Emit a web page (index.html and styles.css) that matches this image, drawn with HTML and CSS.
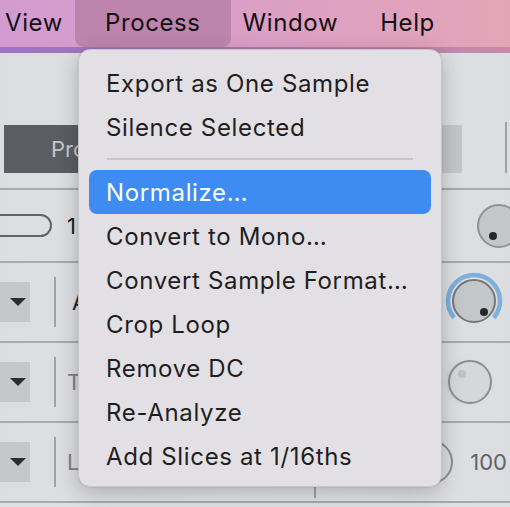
FILE: index.html
```html
<!DOCTYPE html>
<html lang="en">
<head>
<meta charset="utf-8">
<title>Process menu</title>
<link rel="stylesheet" href="styles.css">
</head>
<body>
<div class="screen">
  <header class="menubar">
    <span class="menu-title">View</span>
    <span class="menu-title active">Process</span>
    <span class="menu-title">Window</span>
    <span class="menu-title">Help</span>
  </header>
  <div class="menubar-edge"></div>

  <main class="window">
    <div class="row row-top">
      <div class="dark-btn">Process</div>
      <div class="light-btn"></div>
      <div class="vline tall"></div>
    </div>
    <div class="row row-2">
      <div class="pill"></div>
      <span class="value dark">1</span>
      <div class="knob knob-a"><span class="dot"></span></div>
    </div>
    <div class="row row-3">
      <div class="dropdown"><span class="tri"></span></div>
      <div class="vline"></div>
      <span class="label dark">A</span>
      <div class="knob-ring">
        <svg width="60" height="60" viewBox="0 0 60 60" class="ring">
          <path d="M 10.1 46.7 A 26 26 0 1 1 49.9 46.7" fill="none" stroke="#7db0dc" stroke-width="4.5"/>
        </svg>
        <div class="knob knob-b"><span class="dot"></span></div>
      </div>
    </div>
    <div class="row row-4">
      <div class="dropdown"><span class="tri"></span></div>
      <div class="vline"></div>
      <span class="label muted">T</span>
      <div class="knob knob-c"><span class="dot"></span></div>
    </div>
    <div class="row row-5">
      <div class="dropdown"><span class="tri"></span></div>
      <div class="vline"></div>
      <span class="label muted">L</span>
      <div class="vline low"></div>
      <div class="knob knob-d"></div>
      <span class="value muted">100</span>
    </div>
  </main>

  <nav class="dropdown-menu">
    <div class="item">Export as One Sample</div>
    <div class="item">Silence Selected</div>
    <div class="separator"></div>
    <div class="item selected">Normalize…</div>
    <div class="item">Convert to Mono…</div>
    <div class="item">Convert Sample Format…</div>
    <div class="item">Crop Loop</div>
    <div class="item">Remove DC</div>
    <div class="item">Re-Analyze</div>
    <div class="item">Add Slices at 1/16ths</div>
  </nav>
</div>
</body>
</html>
```

FILE: styles.css
```css
html, body {
  margin: 0;
  padding: 0;
}
body {
  width: 510px;
  height: 507px;
  overflow: hidden;
  font-family: "Inter", "Noto Sans", sans-serif;
  background: #dfe0e3;
}
.screen {
  position: relative;
  width: 510px;
  height: 507px;
  overflow: hidden;
}

/* menu bar */
.menubar {
  height: 47px;
  display: flex;
  align-items: stretch;
  gap: 42px;
  padding-left: 5px;
  background: linear-gradient(90deg, #d39bd0 0%, #dc9fc6 50%, #e3a5b6 100%);
  font-size: 24px;
  letter-spacing: 0.6px;
  color: #111;
}
.menu-title {
  display: flex;
  align-items: center;
  padding-bottom: 3px;
}
.menu-title.active {
  padding: 0 30px 3px;
  margin: 0 -30px;
  background: #bd85ae;
  border-radius: 0 0 9px 9px;
}
.menubar-edge {
  height: 6px;
  background: linear-gradient(90deg, #9c72c2 0%, #b47ab8 50%, #c98aa8 100%);
}

/* background window */
.window {
  display: flex;
  flex-direction: column;
  background: linear-gradient(90deg, #dcdde0, #e1e2e5 60%, #dcdde0);
}
.row {
  display: flex;
  align-items: center;
  border-bottom: 2px solid #a6aaae;
  font-size: 22px;
}
.row-top {
  height: 137px;
  align-items: flex-end;
  box-sizing: border-box;
  padding-bottom: 15px;
}
.dark-btn {
  margin-left: 4px;
  width: 200px;
  height: 48px;
  background: #5a5e62;
  color: #c4c7ca;
  box-sizing: border-box;
  padding-left: 47px;
  display: flex;
  align-items: center;
}
.light-btn {
  margin-left: auto;
  width: 80px;
  height: 48px;
  background: #c4c7ca;
}
.vline {
  width: 2px;
  height: 50px;
  background: #9ea2a6;
  flex: none;
}
.vline.tall {
  height: 51px;
  margin-left: 43px;
  margin-right: 3px;
}
.row-2 { height: 71px; }
.row-3 { height: 78px; }
.row-4 { height: 78px; }
.row-5 { height: 78px; }

.pill {
  width: 70px;
  height: 23px;
  margin-left: -18px;
  border: 2px solid #5f6468;
  border-radius: 13px;
  box-sizing: border-box;
  flex: none;
}
.value.dark {
  margin-left: 15px;
  color: #1c1c1e;
}
.dark { color: #222; }
.muted { color: #7c8085; }

.dropdown {
  width: 30px;
  height: 40px;
  background: #c5c8cb;
  flex: none;
  display: flex;
  align-items: center;
  padding-left: 10px;
  box-sizing: border-box;
}
.tri {
  width: 0;
  height: 0;
  border-left: 8px solid transparent;
  border-right: 8px solid transparent;
  border-top: 8px solid #2a2d30;
}
.row .dropdown + .vline {
  margin-left: 24px;
}
.label.dark { margin-left: 16px; }
.label.muted { margin-left: 11px; }

.knob {
  position: relative;
  width: 44px;
  height: 44px;
  border-radius: 50%;
  border: 2px solid #8e9296;
  background: #c4c7ca;
  box-sizing: border-box;
  flex: none;
}
.dot {
  position: absolute;
  width: 8px;
  height: 8px;
  border-radius: 50%;
  background: #25282b;
}
.knob-a {
  margin-left: auto;
  margin-right: -11px;
}
.knob-a .dot { left: 10px; top: 26px; }

.knob-ring {
  position: relative;
  margin-left: auto;
  margin-right: 6px;
  width: 60px;
  height: 60px;
  display: flex;
  align-items: center;
  justify-content: center;
  flex: none;
  margin-top: -3px;
}
.ring {
  position: absolute;
  left: 0;
  top: 0;
}
.knob-b {
  border-color: #72777b;
}
.knob-b .dot { left: 26px; top: 27px; }

.knob-c {
  margin-left: auto;
  margin-right: 18px;
  background: #d5d7da;
  border-color: #8b8f93;
  box-shadow: -3px 0 4px -2px rgba(120, 124, 128, 0.25);
}
.knob-c .dot { left: 8px; top: 8px; background: #bfc2c5; }

.vline.low {
  margin-left: 235px;
  height: 47px;
  margin-top: 24px;
}
.knob-d {
  margin-left: auto;
  background: transparent;
  border-color: #8b8f93;
}
.value.muted {
  margin-left: 17px;
  margin-right: 3px;
  color: #5f6367;
}

/* the open menu */
.dropdown-menu {
  position: absolute;
  left: 78px;
  top: 49px;
  width: 364px;
  height: 438px;
  box-sizing: border-box;
  padding: 11px 10px 10px;
  background: #e3e0e5;
  border: 1px solid #c8c6cb;
  border-radius: 12px;
  box-shadow: 0 6px 22px rgba(0, 0, 0, 0.22), 0 0 2px rgba(0, 0, 0, 0.15);
  display: flex;
  flex-direction: column;
}
.item {
  height: 44px;
  display: flex;
  align-items: center;
  padding-left: 17px;
  font-size: 24px;
  letter-spacing: 0.65px;
  color: #1f1e21;
  border-radius: 8px;
  flex: none;
}
.item.selected {
  background: #3e8bf2;
  color: #fff;
}
.separator {
  height: 2px;
  margin: 9px 18px 10px 18px;
  background: #c7c4c9;
  flex: none;
}
```
